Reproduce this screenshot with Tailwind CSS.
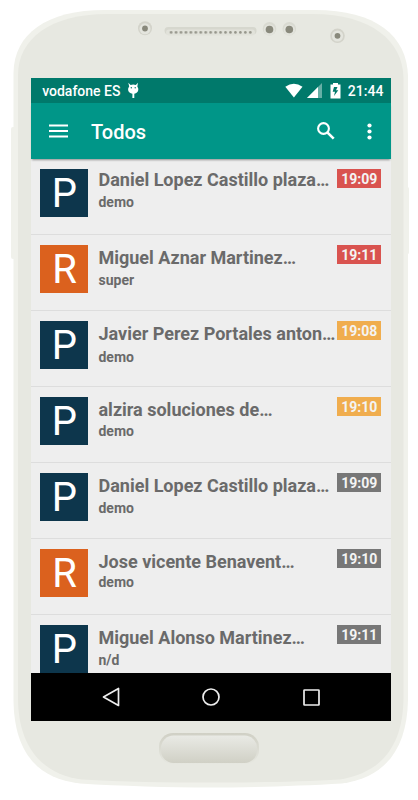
<!DOCTYPE html>
<html lang="es">
<head>
<meta charset="utf-8">
<title>Todos</title>
<script src="https://cdn.jsdelivr.net/npm/@tailwindcss/browser@4"></script>
</head>
<body class="bg-white font-[Roboto,sans-serif] overflow-hidden">
<div class="relative w-[418px] h-[800px] overflow-hidden pt-[78px] pl-[30.700px]">
  <!-- phone body -->
  <svg class="absolute inset-0" width="418" height="800" viewBox="0 0 418 800">
    <defs>
      <linearGradient id="home" x1="0" y1="0" x2="0" y2="1"><stop offset="0" stop-color="#e9eae5"/><stop offset="1" stop-color="#d0d0c5"/></linearGradient>
      <linearGradient id="rim" x1="0" y1="0" x2="0" y2="1"><stop offset="0" stop-color="#d0d0c5"/><stop offset="1" stop-color="#e6e7e0"/></linearGradient>
      <pattern id="holes" x="168.7" y="29" width="4.95" height="7" patternUnits="userSpaceOnUse"><circle cx="2.4" cy="3.4" r="1.35" fill="#96968b"/></pattern>
    </defs>
    <rect x="11" y="127" width="6" height="132" rx="2" fill="#f0f1eb"/>
    <rect x="404" y="187" width="5" height="67" rx="1.500" fill="#f0f1eb"/>
    <path d="M13.500 73C14 34 46 10 105 10H315C376 10 407 36 408 76V700C407 746 388 777 342 783.500C300 786 250 787.500 210 787.500C170 787.500 120 786 80 783.500C32 778 14 746 13.500 700Z" fill="#f0f1eb"/>
    <path d="M18 75C18 39 50 14 107 14H313C371 14 403 41 403.500 78V698C403 742 385 772 340 779.500C300 782 250 782.500 210 782.500C170 782.500 120 782 82 779.500C38 774 18 742 18 698Z" fill="#e7e8e1"/>
    <g>
      <circle cx="145" cy="28.300" r="7" fill="#d3d3ca"/><circle cx="145" cy="28.800" r="5.500" fill="#e4e5de"/><circle cx="145" cy="28.500" r="2.900" fill="#89897c"/>
      <rect x="164.500" y="27" width="92" height="7.500" rx="3.700" fill="#d6d7ce"/>
      <rect x="166" y="29.500" width="89" height="6" rx="3" fill="#e1e2da"/>
      <rect x="168.700" y="29" width="84.150" height="7" fill="url(#holes)"/>
      <circle cx="269.500" cy="28.800" r="6.800" fill="#d9dad1"/><circle cx="269.500" cy="30" r="5.800" fill="#e2e3dc"/><circle cx="269.500" cy="29.500" r="3.800" fill="#89897c"/>
      <circle cx="289.300" cy="28.800" r="6.800" fill="#d9dad1"/><circle cx="289.300" cy="30" r="5.800" fill="#e2e3dc"/><circle cx="289.300" cy="29.500" r="3.800" fill="#89897c"/>
      <circle cx="337.500" cy="35.800" r="7.300" fill="#d3d3ca"/><circle cx="337.500" cy="36" r="5.600" fill="#e4e5de"/><circle cx="337.500" cy="35.800" r="2.900" fill="#89897c"/>
    </g>
    <rect x="159" y="733" width="100" height="31" rx="14" fill="url(#rim)"/>
    <rect x="161" y="735.500" width="96" height="27.500" rx="12.500" fill="url(#home)"/>
  </svg>

  <main class="relative w-[360.400px] h-[643px] flex flex-col bg-[#eeeeee]">
    <div class="h-[25px] shrink-0 bg-[#00796b] flex items-center pl-[11.500px] pr-[7.700px] text-white text-[14px] font-medium">
      <span class="pt-px">vodafone ES</span>
      <svg class="ml-[7px]" width="13" height="17" viewBox="0 0 13 17" fill="#fff"><path d="M1.300 .8L3.600 3Q6.200 2 8.800 3L11 .8L10.300 4.500Q11.600 6 11.300 8Q10.600 11.300 7.300 11.800V16H5.400V11.800Q1.800 11.300 1.100 8Q.8 6 2.200 4.500Z"/><circle cx="4.300" cy="5.800" r=".7" fill="#00796b"/><circle cx="8.200" cy="5.800" r=".7" fill="#00796b"/></svg>
      <span class="grow"></span>
      <svg class="mr-[4px]" width="18" height="15" viewBox="0 0 18 15" fill="#fff"><path d="M.3 3.800Q8.900-2.500 17.500 3.800L8.900 14.500Z"/></svg>
      <svg class="mr-[8px]" width="15" height="15" viewBox="0 0 15 15"><path d="M0 15L15 0V15Z" fill="#66afa6"/><path d="M0 15L11 4V15Z" fill="#fff"/></svg>
      <svg class="mr-[6.500px]" width="11" height="16" viewBox="0 0 11 16"><path d="M3 0H8V1.500H10.500V15.500H.5V1.500H3Z" fill="#fff"/><path d="M7.500 4H4L2.700 8.700H5L4 13L8.300 7.300H6Z" fill="#00796b"/></svg>
      <span class="pt-px">21:44</span>
    </div>
    <header class="relative z-10 h-[56px] shrink-0 bg-[#009688] shadow-[0_2px_2px_-1px_rgba(0,0,0,0.4)] flex items-center pl-[18.300px] pr-[19.300px] text-white">
      <svg class="-mt-px" width="19" height="14" viewBox="0 0 19 14" fill="#fff"><path d="M0 .5H19V2.500H0ZM0 6H19V8H0ZM0 11.500H19V13.500H0Z"/></svg>
      <h1 class="ml-[23px] mt-[2px] text-[20px] font-medium leading-6">Todos</h1>
      <span class="grow"></span>
      <svg class="-mt-px" width="18" height="18" viewBox="0 0 18 18" fill="none" stroke="#fff"><circle cx="6.500" cy="6.500" r="5.400" stroke-width="2.100"/><path d="M10.300 10.300L16.700 16.700" stroke-width="2.600"/></svg>
      <svg class="ml-[31.500px]" width="5" height="17" viewBox="0 0 5 17" fill="#fff"><circle cx="2.500" cy="2.500" r="2.100"/><circle cx="2.500" cy="8.500" r="2.100"/><circle cx="2.500" cy="14.500" r="2.100"/></svg>
    </header>

    <ul class="h-[514px] overflow-hidden text-[#6a6a6a] font-bold whitespace-nowrap">
      <li class="h-[76px] flex border-b border-[#dddddd] pt-[10px] pl-[9.800px] pr-[9.700px]">
        <div class="size-[48px] bg-[#0d364c] text-white font-normal text-[40px] leading-[49px] text-center">P</div>
        <div class="ml-[10px] grow w-0"><p class="text-[18px] leading-[22px]">Daniel Lopez Castillo plaza…</p><p class="text-[14px] leading-4 mt-[3px]">demo</p></div>
        <time class="w-[44.300px] h-[19px] bg-[#d9534f] text-[#f4f4f4] text-[14px] leading-[20px] text-center">19:09</time>
      </li>
      <li class="h-[76px] flex border-b border-[#dddddd] pt-[10px] pl-[9.800px] pr-[9.700px]">
        <div class="size-[48px] bg-[#db611e] text-white font-normal text-[40px] leading-[49px] text-center">R</div>
        <div class="ml-[10px] grow w-0 pt-[2px]"><p class="text-[18px] leading-[22px]">Miguel Aznar Martinez…</p><p class="text-[14px] leading-4 mt-[3px]">super</p></div>
        <time class="w-[44.300px] h-[19px] bg-[#d9534f] text-[#f4f4f4] text-[14px] leading-[20px] text-center">19:11</time>
      </li>
      <li class="h-[76px] flex border-b border-[#dddddd] pt-[10px] pl-[9.800px] pr-[9.700px]">
        <div class="size-[48px] bg-[#0d364c] text-white font-normal text-[40px] leading-[49px] text-center">P</div>
        <div class="ml-[10px] grow w-0 pt-[2px]"><p class="text-[18px] leading-[22px]">Javier Perez Portales anton…</p><p class="text-[14px] leading-4 mt-[4px]">demo</p></div>
        <time class="w-[44.300px] h-[19px] bg-[#f0ad4e] text-[#f4f4f4] text-[14px] leading-[20px] text-center">19:08</time>
      </li>
      <li class="h-[76px] flex border-b border-[#dddddd] pt-[10px] pl-[9.800px] pr-[9.700px]">
        <div class="size-[48px] bg-[#0d364c] text-white font-normal text-[40px] leading-[49px] text-center">P</div>
        <div class="ml-[10px] grow w-0 pt-[2px]"><p class="text-[18px] leading-[22px]">alzira soluciones de…</p><p class="text-[14px] leading-4 mt-[2px]">demo</p></div>
        <time class="w-[44.300px] h-[19px] bg-[#f0ad4e] text-[#f4f4f4] text-[14px] leading-[20px] text-center">19:10</time>
      </li>
      <li class="h-[76px] flex border-b border-[#dddddd] pt-[10px] pl-[9.800px] pr-[9.700px]">
        <div class="size-[48px] bg-[#0d364c] text-white font-normal text-[40px] leading-[49px] text-center">P</div>
        <div class="ml-[10px] grow w-0 pt-[2px]"><p class="text-[18px] leading-[22px]">Daniel Lopez Castillo plaza…</p><p class="text-[14px] leading-4 mt-[3px]">demo</p></div>
        <time class="w-[44.300px] h-[19px] bg-[#777777] text-[#f4f4f4] text-[14px] leading-[20px] text-center">19:09</time>
      </li>
      <li class="h-[76px] flex border-b border-[#dddddd] pt-[10px] pl-[9.800px] pr-[9.700px]">
        <div class="size-[48px] bg-[#db611e] text-white font-normal text-[40px] leading-[49px] text-center">R</div>
        <div class="ml-[10px] grow w-0 pt-[2px]"><p class="text-[18px] leading-[22px]">Jose vicente Benavent…</p><p class="text-[14px] leading-4 mt-px">demo</p></div>
        <time class="w-[44.300px] h-[19px] bg-[#777777] text-[#f4f4f4] text-[14px] leading-[20px] text-center">19:10</time>
      </li>
      <li class="h-[76px] flex pt-[10px] pl-[9.800px] pr-[9.700px]">
        <div class="size-[48px] bg-[#0d364c] text-white font-normal text-[40px] leading-[49px] text-center">P</div>
        <div class="ml-[10px] grow w-0 pt-[2px]"><p class="text-[18px] leading-[22px]">Miguel Alonso Martinez…</p><p class="text-[14px] leading-4 mt-[3px]">n/d</p></div>
        <time class="w-[44.300px] h-[19px] bg-[#777777] text-[#f4f4f4] text-[14px] leading-[20px] text-center">19:11</time>
      </li>
    </ul>

    <nav class="h-[48px] shrink-0 bg-black flex items-center pl-[71px] pr-[71.300px] justify-between">
      <svg width="18" height="20" viewBox="0 0 18 20" fill="none" stroke="#eee" stroke-width="1.700" stroke-linejoin="round"><path d="M16.500 1.500V18.500L1.500 10Z"/></svg>
      <svg width="18" height="18" viewBox="0 0 18 18" fill="none" stroke="#eee" stroke-width="1.700"><circle cx="9" cy="9" r="8"/></svg>
      <svg width="17" height="17" viewBox="0 0 17 17" fill="none" stroke="#eee" stroke-width="1.700"><rect x="1" y="1" width="15" height="15" rx=".5"/></svg>
    </nav>
  </main>
</div>
</body>
</html>
